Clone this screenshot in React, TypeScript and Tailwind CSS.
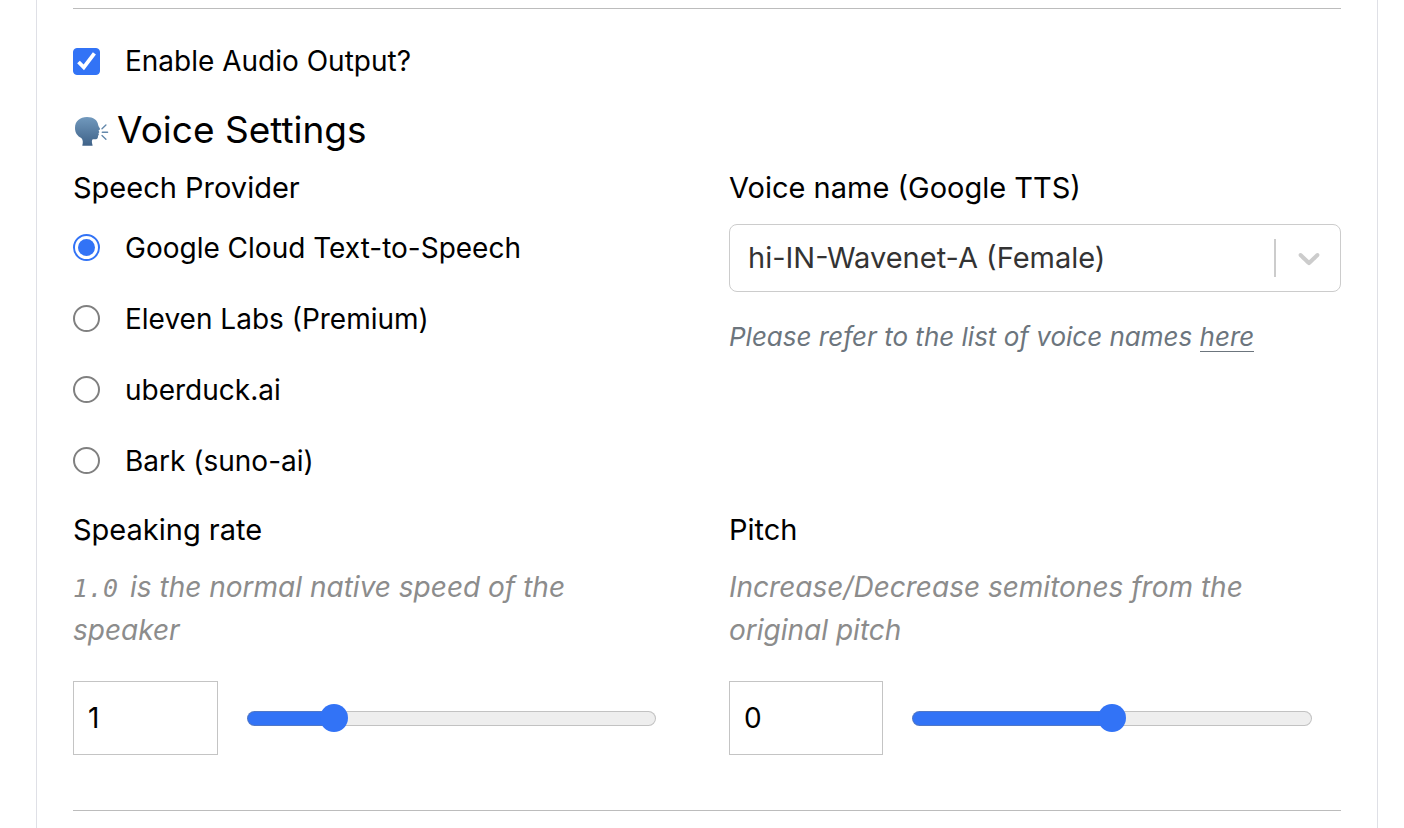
import { useState } from "react";
import type { ReactNode } from "react";

const ACCENT = "#3273f6";
const TRACK = "#eeeeee";

function SpeakingHead() {
  return (
    <svg viewBox="0 -2 36 32" className="h-8 w-9 shrink-0" aria-hidden="true">
      <defs>
        <linearGradient id="head" x1="0" y1="0" x2="0" y2="1">
          <stop offset="0" stopColor="#7199bd" />
          <stop offset="1" stopColor="#3f6288" />
        </linearGradient>
      </defs>
      <path
        fill="url(#head)"
        d="M14 1C20.500 1 24.600 4.200 25.200 9c.2 1.500 1.800 3.200 1.900 4.100.1.800-1.400.9-1.500 1.500-.1.600.8 1 .7 1.600-.1.500-.8.600-.8 1 0 .500.500.900.3 1.500-.2.600-.8.700-.8 1.400 0 1.500-.2 3-1.900 3.200-1.800.2-3.500-.3-4 .9-.4 1-.2 2.900.4 4.700.2.600-.1.900-.700.9H10.100c-.6 0-.9-.3-.7-.9.700-2.200.7-4.900-1.100-6.900C4.600 20 2 17 2 11.900 2 5.200 6.900 1 14 1Z"
      />
      <path
        stroke="#6388ab"
        strokeWidth="1.400"
        strokeLinecap="round"
        fill="none"
        d="m29 12.700 3.900-3.700M29.300 16.200h5.300M29 19.600l3.900 3.600"
      />
    </svg>
  );
}

function Label({ htmlFor, children }: { htmlFor: string; children: ReactNode }) {
  return (
    <label htmlFor={htmlFor} className="block text-[29px] leading-9">
      {children}
    </label>
  );
}

function Radio({
  label,
  checked,
  onChange,
}: {
  label: string;
  checked: boolean;
  onChange: () => void;
}) {
  return (
    <label className="flex h-[71px] items-center gap-[25px] text-[28px]">
      <input
        type="radio"
        name="provider"
        checked={checked}
        onChange={onChange}
        className="grid size-[27px] shrink-0 appearance-none place-items-center rounded-full border-2 border-[#808080] bg-white before:size-[17px] before:rounded-full checked:border-[#3273f6] checked:before:bg-[#3273f6]"
      />
      {label}
    </label>
  );
}

function NumberSlider({
  id,
  label,
  hint,
  min,
  max,
  step,
  initial,
  boxClass,
}: {
  id: string;
  label: string;
  hint: ReactNode;
  min: number;
  max: number;
  step: number;
  initial: number;
  boxClass: string;
}) {
  const [value, setValue] = useState(initial);
  const percent = ((value - min) / (max - min)) * 100;
  return (
    <div className="pr-[29px]">
      <Label htmlFor={id}>{label}</Label>
      <p className="mt-[18px] text-[28px] leading-[43px] text-[#8c8c8c] italic">{hint}</p>
      <div className="mt-[29px] flex items-center gap-[29px]">
        <input
          id={id}
          type="text"
          inputMode="decimal"
          value={value}
          onChange={(e) => setValue(Number(e.target.value) || 0)}
          className={`h-[74px] shrink-0 border border-[#c4c4c4] px-3.5 text-[28px] outline-none ${boxClass}`}
        />
        <input
          type="range"
          aria-label={`${label} slider`}
          min={min}
          max={max}
          step={step}
          value={value}
          onChange={(e) => setValue(Number(e.target.value))}
          style={{
            backgroundImage: `linear-gradient(to right, ${ACCENT} ${percent}%, ${TRACK} ${percent}%)`,
          }}
          className="h-[15px] min-w-0 flex-1 appearance-none rounded-full border border-[#808080]/40 bg-origin-border [&::-webkit-slider-thumb]:size-7 [&::-webkit-slider-thumb]:appearance-none [&::-webkit-slider-thumb]:rounded-full [&::-webkit-slider-thumb]:bg-[#3273f6]"
        />
      </div>
    </div>
  );
}

const providers = [
  "Google Cloud Text-to-Speech",
  "Eleven Labs (Premium)",
  "uberduck.ai",
  "Bark (suno-ai)",
];

export default function App() {
  const [enabled, setEnabled] = useState(true);
  const [provider, setProvider] = useState(providers[0]);

  return (
    <div className="min-h-screen bg-white pr-[26px] pl-9 font-['Inter',sans-serif] text-black">
      <main className="min-h-screen border-x border-[#dfe0e6] px-9 pt-2">
        <hr className="border-[#bcbcbc]" />

        <label className="mt-[31px] flex h-[42px] items-center gap-[25px] text-[28px]">
          <span className="relative grid size-[27px] shrink-0 place-items-center">
            <input
              type="checkbox"
              checked={enabled}
              onChange={(e) => setEnabled(e.target.checked)}
              className="peer size-[27px] appearance-none rounded-[4px] border border-[#767676] checked:border-[#3273f6] checked:bg-[#3273f6]"
            />
            <svg
              viewBox="0 0 27 27"
              className="pointer-events-none absolute inset-0 hidden size-[27px] peer-checked:block"
              aria-hidden="true"
            >
              <path d="m5.500 14 5.300 5.300L21.400 5.400" fill="none" stroke="#fff" strokeWidth="3.800" />
            </svg>
          </span>
          Enable Audio Output?
        </label>

        <h2 className="mt-[26px] flex h-11 items-center gap-2 text-[37px]">
          <SpeakingHead />
          Voice Settings
        </h2>

        <div className="mt-[18px] grid grid-cols-2 gap-x-11 gap-y-4">
          <fieldset>
            <legend className="text-[29px] leading-9">Speech Provider</legend>
            <div className="mt-[6px]">
              {providers.map((name) => (
                <Radio
                  key={name}
                  label={name}
                  checked={provider === name}
                  onChange={() => setProvider(name)}
                />
              ))}
            </div>
          </fieldset>

          <div>
            <Label htmlFor="voice">Voice name (Google TTS)</Label>
            <div className="relative mt-[18px]">
              <select
                id="voice"
                className="h-[68px] w-full appearance-none rounded-lg border border-[#cccccc] bg-white pr-20 pl-[18px] text-[29px] text-[#333333] outline-none"
              >
                <option>hi-IN-Wavenet-A (Female)</option>
              </select>
              <div className="pointer-events-none absolute inset-y-[15px] right-0 flex w-[67px] items-center justify-center border-l-2 border-[#cccccc]">
                <svg viewBox="0 0 20 20" className="size-9 fill-[#cccccc]" aria-hidden="true">
                  <path d="M4.516 7.548c0.436-0.446 1.043-0.481 1.576 0l3.908 3.747 3.908-3.747c0.533-0.481 1.141-0.446 1.574 0 0.436 0.445 0.408 1.197 0 1.615-0.406 0.418-4.695 4.502-4.695 4.502-0.217 0.223-0.502 0.335-0.787 0.335s-0.57-0.112-0.789-0.335c0 0-4.287-4.084-4.695-4.502s-0.436-1.170 0-1.615z" />
                </svg>
              </div>
            </div>
            <p className="mt-[26px] text-[26px] leading-[38px] text-[#6c757d] italic">
              Please refer to the list of voice names{" "}
              <a href="#voices" className="inline-block border-b border-[#6c757d] leading-7">
                here
              </a>
            </p>
          </div>

          <NumberSlider
            id="rate"
            label="Speaking rate"
            hint={
              <>
                <code className="mr-1 font-['DejaVu_Sans_Mono',monospace] text-[25px] leading-none">1.0</code> is
                the normal native speed of the speaker
              </>
            }
            min={0.3}
            max={4}
            step={0.1}
            initial={1}
            boxClass="w-[145px]"
          />
          <NumberSlider
            id="pitch"
            label="Pitch"
            hint="Increase/Decrease semitones from the original pitch"
            min={-20}
            max={20}
            step={0.25}
            initial={0}
            boxClass="w-[154px]"
          />
        </div>

        <hr className="mt-[55px] border-[#bcbcbc]" />
      </main>
    </div>
  );
}
